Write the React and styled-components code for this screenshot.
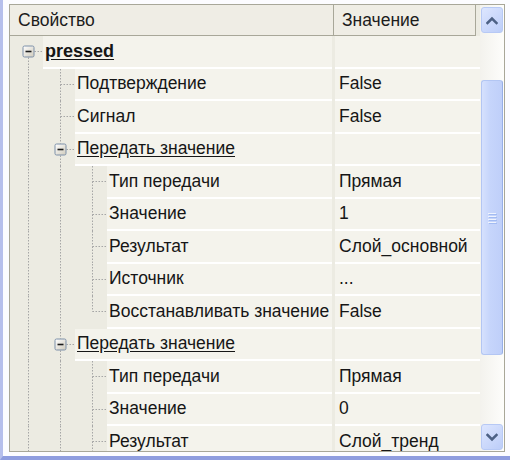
import React from 'react'
import styled, { createGlobalStyle } from 'styled-components'

const GlobalStyle = createGlobalStyle`
  html, body { margin: 0; padding: 0; background: #fff; }
  body { font-family: "Liberation Sans", Arial, sans-serif; }
`

const ROW_H = 32.5
const CY = 15.5
const INDENT = 32
const LINE = '#a6a6a6'

const rows = [
  { level: 0, label: 'pressed', kind: 'root', more: true },
  { level: 1, label: 'Подтверждение', value: 'False', more: true },
  { level: 1, label: 'Сигнал', value: 'False', more: true },
  { level: 1, label: 'Передать значение', kind: 'group', more: true },
  { level: 2, label: 'Тип передачи', value: 'Прямая', more: true },
  { level: 2, label: 'Значение', value: '1', more: true },
  { level: 2, label: 'Результат', value: 'Слой_основной', more: true },
  { level: 2, label: 'Источник', value: '...', more: true },
  { level: 2, label: 'Восстанавливать значение', value: 'False', more: false },
  { level: 1, label: 'Передать значение', kind: 'group', more: true },
  { level: 2, label: 'Тип передачи', value: 'Прямая', more: true },
  { level: 2, label: 'Значение', value: '0', more: true },
  { level: 2, label: 'Результат', value: 'Слой_тренд', more: true },
]

const Frame = styled.div`
  box-sizing: border-box;
  width: 510px;
  height: 460px;
  padding: 4px 5px 4px 6px;
  border-left: 3px solid #b6bfec;
  border-bottom: 4px solid #8f9ddf;
  background: #fcfcff;
`

const Panel = styled.div`
  box-sizing: border-box;
  height: 100%;
  display: flex;
  border: 1px solid #a8a799;
  background: #ecebe2;
  overflow: hidden;
`

const Grid = styled.div`
  flex: 1;
  min-width: 0;
  display: flex;
  flex-direction: column;
  overflow: hidden;
`

const Header = styled.div`
  flex-shrink: 0;
  display: flex;
  height: 30px;
  margin-right: 4px;
  border-right: 1px solid #a8a799;
  border-bottom: 1px solid #a8a799;
  background: #efede5;
`

const HeaderCell = styled.div`
  box-sizing: border-box;
  display: flex;
  align-items: center;
  padding-left: 8px;
  font-size: 17.5px;
  color: #1c1c1c;
  ${p => p.$width ? `width: ${p.$width}px; border-right: 1px solid #a8a799;` : 'flex: 1;'}
`

const Row = styled.div`
  flex-shrink: 0;
  display: flex;
  height: ${ROW_H}px;
`

const NameCell = styled.div`
  flex-shrink: 0;
  display: flex;
  width: 322px;
`

const Gutter = styled.div`
  flex-shrink: 0;
  width: ${p => 33 + p.$level * INDENT}px;
  svg { display: block; }
`

const Label = styled.div`
  flex: 1;
  min-width: 0;
  display: flex;
  align-items: center;
  padding-left: 2px;
  background: #f4f3ec;
  border-bottom: 2px solid #fff;
  font-size: ${p => p.$kind === 'root' ? 18 : 17.5}px;
  font-weight: ${p => p.$kind === 'root' ? 700 : 400};
  text-decoration: ${p => p.$kind ? 'underline' : 'none'};
  text-underline-offset: 2px;
  color: #161616;
  white-space: nowrap;
`

const ValueCell = styled.div`
  flex: 1;
  display: flex;
  align-items: center;
  margin-left: 3px;
  padding-left: 4px;
  background: #f4f3ec;
  border-bottom: 2px solid #fff;
  font-size: 17.5px;
  color: #161616;
  white-space: nowrap;
`

const Scrollbar = styled.div`
  flex-shrink: 0;
  box-sizing: border-box;
  width: 24px;
  display: flex;
  flex-direction: column;
  padding: 2px 1px 1px 1px;
  background: linear-gradient(to right, #f3f2ed, #fdfdfb);
`

const ArrowButton = styled.div`
  flex-shrink: 0;
  height: 26px;
  box-sizing: border-box;
  display: flex;
  align-items: center;
  justify-content: center;
  border: 1px solid #b7c9f5;
  border-radius: 3px;
  background: linear-gradient(135deg, #dde6ff, #bccdf8);
`

const Thumb = styled.div`
  flex-shrink: 0;
  box-sizing: border-box;
  display: flex;
  align-items: center;
  justify-content: center;
  border: 1px solid #b3c6f3;
  border-right-color: #97aee6;
  border-radius: 3px;
  background: linear-gradient(to right, #d6e1fd, #c6d5fb 40%, #bfcff9);
`

const Grip = styled.div`
  display: flex;
  flex-direction: column;
  gap: 2px;
  span {
    display: block;
    width: 8px;
    height: 1px;
    background: #eef3fe;
    box-shadow: 1px 1px 0 #a2bbf2;
  }
`

const Track = styled.div`
  flex: 1;
`

function Chevron({ up }) {
  return (
    <svg width="12" height="9" viewBox="0 0 12 9">
      <path d={up ? 'M1.5 7 L6 2.5 L10.5 7' : 'M1.5 2 L6 6.5 L10.5 2'}
        fill="none" stroke="#4d6185" strokeWidth="2.6" strokeLinecap="square" />
    </svg>
  )
}

function ExpandBox({ x }) {
  return (
    <g>
      <rect x={x - 5.5} y={CY - 5.5} width="11" height="11" rx="1.5"
        fill="url(#boxfill)" stroke="#7d90a9" />
      <line x1={x - 3} y1={CY} x2={x + 3} y2={CY} stroke="#1b1b1b" strokeWidth="1.6" />
    </g>
  )
}

function TreeLines({ row, index, cont }) {
  const w = 33 + row.level * INDENT
  const x = 18.5 + row.level * INDENT
  const box = row.kind === 'root' || row.kind === 'group'
  const gap = box ? 6 : 0
  return (
    <svg width={w} height={ROW_H}>
      <defs>
        <linearGradient id="boxfill" x1="0" y1="0" x2="1" y2="1">
          <stop offset="0" stopColor="#ffffff" />
          <stop offset="1" stopColor="#cfcabb" />
        </linearGradient>
      </defs>
      {cont.map((c, d) => c && d < row.level ? (
        <line key={d} x1={18.5 + d * INDENT} y1="0" x2={18.5 + d * INDENT} y2={ROW_H}
          stroke={LINE} strokeDasharray="1.5 1.5" />
      ) : null)}
      {index > 0 && (
        <line x1={x} y1="0" x2={x} y2={CY - gap} stroke={LINE} strokeDasharray="1.5 1.5" />
      )}
      {row.more && (
        <line x1={x} y1={CY + gap} x2={x} y2={ROW_H} stroke={LINE} strokeDasharray="1.5 1.5" />
      )}
      <line x1={x + gap} y1={CY} x2={w} y2={CY} stroke={LINE} strokeDasharray="1.5 1.5" />
      {box && <ExpandBox x={x} />}
    </svg>
  )
}

export default function App() {
  const cont = []
  const items = rows.map((row, i) => {
    const snapshot = cont.slice(0, row.level)
    cont[row.level] = row.more
    cont.length = row.level + 1
    return (
      <Row key={i}>
        <NameCell>
          <Gutter $level={row.level}>
            <TreeLines row={row} index={i} cont={snapshot} />
          </Gutter>
          <Label $kind={row.kind}>{row.label}</Label>
        </NameCell>
        <ValueCell>{row.value}</ValueCell>
      </Row>
    )
  })

  return (
    <>
      <GlobalStyle />
      <Frame>
        <Panel>
          <Grid>
            <Header>
              <HeaderCell $width={324}>Свойство</HeaderCell>
              <HeaderCell>Значение</HeaderCell>
            </Header>
            {items}
          </Grid>
          <Scrollbar>
            <ArrowButton><Chevron up /></ArrowButton>
            <Thumb style={{ marginTop: 47, height: 275 }}>
              <Grip><span /><span /><span /><span /></Grip>
            </Thumb>
            <Track />
            <ArrowButton><Chevron /></ArrowButton>
          </Scrollbar>
        </Panel>
      </Frame>
    </>
  )
}
